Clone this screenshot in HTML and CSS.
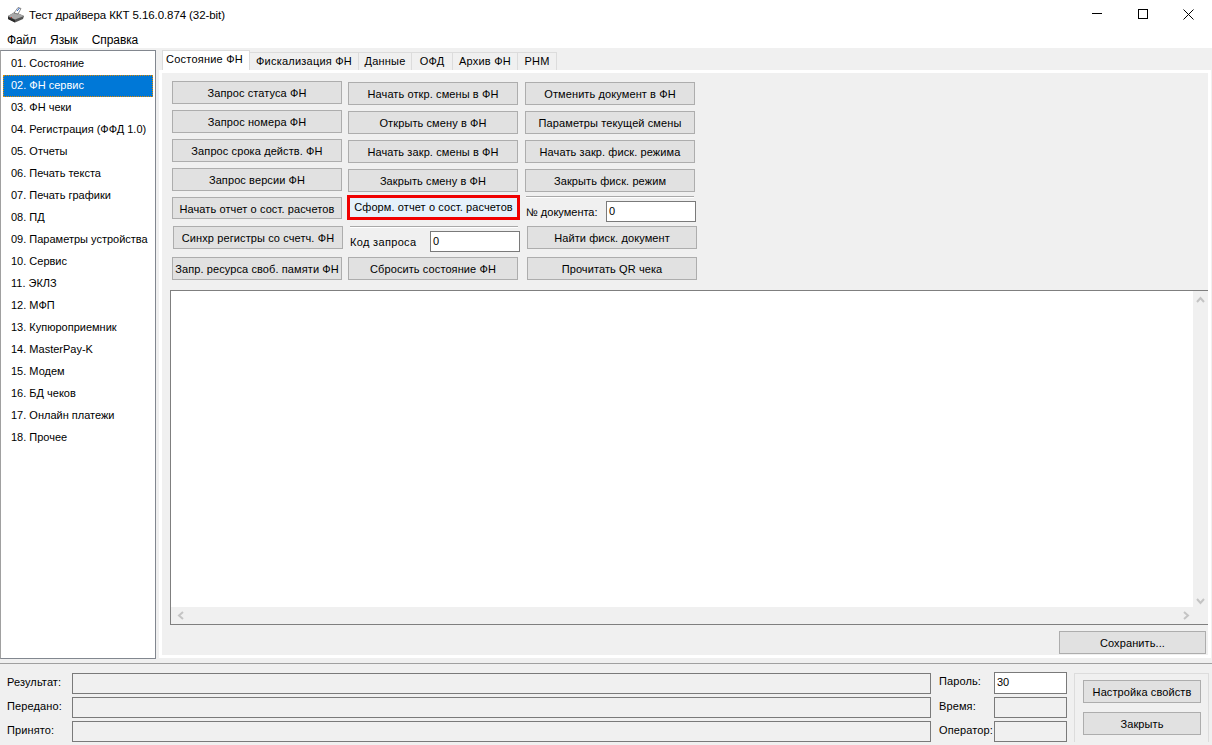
FILE: index.html
```html
<!DOCTYPE html>
<html lang="ru">
<head>
<meta charset="utf-8">
<title>Тест драйвера ККТ</title>
<link rel="stylesheet" href="styles.css">
</head>
<body>
<div class="app">
  <header class="titlebar">
    <svg class="appicon" width="18" height="16" viewBox="0 0 18 16">
      <path d="M1 9 L8 5 L17 9 L16 12 L8 15.5 L1 12 Z" fill="#555"/>
      <path d="M1 9 L8 5 L17 9 L8 12.5 Z" fill="#a8a8a8"/>
      <path d="M1 10 L8 13 L8 15.5 L1 12 Z" fill="#2b2b2b"/>
      <path d="M7 6 L11 .5 L14 1.5 L11 7 Z" fill="#fff" stroke="#444" stroke-width=".6"/>
      <path d="M10 4 L12.5 1" stroke="#2a5fc0" stroke-width="1"/>
      <rect x="4" y="10" width="1" height="1" fill="#c03030"/>
    </svg>
    <span class="title">Тест драйвера ККТ 5.16.0.874 (32-bit)</span>
    <div class="winctl">
      <svg width="10" height="10" viewBox="0 0 10 10"><path d="M0 4.5H10" stroke="#000" fill="none"/></svg>
      <svg width="10" height="10" viewBox="0 0 10 10"><rect x=".5" y=".5" width="9" height="9" stroke="#000" fill="none"/></svg>
      <svg width="11" height="11" viewBox="0 0 11 11"><path d="M.5 .5L10.5 10.5M10.5 .5L.5 10.5" stroke="#000" fill="none"/></svg>
    </div>
  </header>
  <nav class="menu"><span>Файл</span><span>Язык</span><span>Справка</span></nav>
  <main class="main">
    <ul class="side">
      <li>01. Состояние</li>
      <li class="sel">02. ФН сервис</li>
      <li>03. ФН чеки</li>
      <li>04. Регистрация (ФФД 1.0)</li>
      <li>05. Отчеты</li>
      <li>06. Печать текста</li>
      <li>07. Печать графики</li>
      <li>08. ПД</li>
      <li>09. Параметры устройства</li>
      <li>10. Сервис</li>
      <li>11. ЭКЛЗ</li>
      <li>12. МФП</li>
      <li>13. Купюроприемник</li>
      <li>14. MasterPay-K</li>
      <li>15. Модем</li>
      <li>16. БД чеков</li>
      <li>17. Онлайн платежи</li>
      <li>18. Прочее</li>
    </ul>
    <section class="content">
      <div class="tabs">
        <span class="tab active t0">Состояние ФН</span>
        <span class="tab t1">Фискализация ФН</span>
        <span class="tab t2">Данные</span>
        <span class="tab t3">ОФД</span>
        <span class="tab t4">Архив ФН</span>
        <span class="tab t5">РНМ</span>
      </div>
      <div class="pane">
        <div class="grid">
          <div class="col col1">
            <button class="btn">Запрос статуса ФН</button>
            <button class="btn">Запрос номера ФН</button>
            <button class="btn">Запрос срока действ. ФН</button>
            <button class="btn">Запрос версии ФН</button>
            <button class="btn h22">Начать отчет о сост. расчетов</button>
            <button class="btn shift1">Синхр регистры со счетч. ФН</button>
            <button class="btn">Запр. ресурса своб. памяти ФН</button>
          </div>
          <div class="col col2">
            <button class="btn">Начать откр. смены в ФН</button>
            <button class="btn">Открыть смену в ФН</button>
            <button class="btn">Начать закр. смены в ФН</button>
            <button class="btn">Закрыть смену в ФН</button>
            <button class="btn hot">Сформ. отчет о сост. расчетов</button>
            <div class="rule r2"></div>
            <div class="field f2"><label>Код запроса</label><span class="input">0</span></div>
            <button class="btn">Сбросить состояние ФН</button>
          </div>
          <div class="col col3">
            <button class="btn">Отменить документ в ФН</button>
            <button class="btn">Параметры текущей смены</button>
            <button class="btn">Начать закр. фиск. режима</button>
            <button class="btn">Закрыть фиск. режим</button>
            <div class="rule r3"></div>
            <div class="field f3"><label>№ документа:</label><span class="input">0</span></div>
            <button class="btn shift1">Найти фиск. документ</button>
            <button class="btn shift1">Прочитать QR чека</button>
          </div>
        </div>
        <div class="log">
          <div class="logmain">
            <div class="logtext"></div>
            <div class="vbar">
              <svg width="9" height="7" viewBox="0 0 9 7"><path d="M1 6L4.5 2L8 6" stroke="#c4c4c4" stroke-width="2" fill="none"/></svg>
              <svg width="9" height="7" viewBox="0 0 9 7"><path d="M1 1L4.5 5L8 1" stroke="#c4c4c4" stroke-width="2" fill="none"/></svg>
            </div>
          </div>
          <div class="hbar">
            <svg width="7" height="9" viewBox="0 0 7 9"><path d="M6 1L2 4.5L6 8" stroke="#c4c4c4" stroke-width="2" fill="none"/></svg>
            <svg width="7" height="9" viewBox="0 0 7 9"><path d="M1 1L5 4.5L1 8" stroke="#c4c4c4" stroke-width="2" fill="none"/></svg>
          </div>
        </div>
        <div class="savebar"><button class="btn save">Сохранить...</button></div>
      </div>
    </section>
  </main>
  <footer class="status">
    <div class="results">
      <div class="rrow"><label>Результат:</label><span class="out"></span></div>
      <div class="rrow"><label>Передано:</label><span class="out"></span></div>
      <div class="rrow"><label>Принято:</label><span class="out"></span></div>
    </div>
    <div class="meta">
      <div class="mrow"><label>Пароль:</label><span class="input pw">30</span></div>
      <div class="mrow"><label>Время:</label><span class="out"></span></div>
      <div class="mrow"><label>Оператор:</label><span class="out"></span></div>
    </div>
    <div class="group">
      <button class="btn gbtn">Настройка свойств</button>
      <button class="btn gbtn">Закрыть</button>
    </div>
  </footer>
</div>
</body>
</html>
```
FILE: styles.css
```css
* { box-sizing: border-box; }
html, body { margin: 0; padding: 0; }
body { width: 1212px; height: 745px; overflow: hidden; background: #f0f0f0; color: #000;
  font: 11px/13px Tahoma, "Liberation Sans", sans-serif; }
.app { display: flex; flex-direction: column; height: 745px; }

.titlebar { height: 30px; background: #fff; display: flex; align-items: center; padding-left: 7px; }
.appicon { margin-right: 4px; }
.title { font-size: 11.5px; letter-spacing: -.08px; }
.winctl { margin-left: auto; display: flex; align-items: center; gap: 36px; padding: 0 18px 2px 0; }
.winctl svg:last-child { margin-left: -1px; }

.menu { height: 18px; background: #fff; display: flex; gap: 14px; padding: 2px 0 0 7px; font-size: 12px; letter-spacing: -.1px; align-items: center; }

.main { height: 615px; display: flex; align-items: flex-start; padding-top: 2px; }
.side { list-style: none; margin: 0; padding: 2px; width: 156px; height: 609px; background: #fff;
  border: 1px solid #82878f; border-left-color: #a0a0a0; }
.side li { height: 22px; line-height: 21px; padding-left: 8px; white-space: nowrap; }
.side .sel { background: #0078d7; color: #fff; outline: 1px dotted #e08a00; outline-offset: -1px; }

.content { width: 1052px; margin-left: 3px; }
.tabs { display: flex; height: 20px; padding-left: 3px; align-items: flex-end; }
.tab { height: 18px; line-height: 17px; text-align: center; background: #f0f0f0; border: 1px solid #dcdcdc; border-left: 0; border-bottom: 0; letter-spacing: .02em; }
.tab.active { height: 20px; line-height: 17px; padding-right: 3px; background: #fff; border: 1px solid #dcdcdc; border-bottom: 0; }
.t0 { width: 88px; } .t1 { width: 109px; } .t2 { width: 53px; } .t3 { width: 41px; } .t4 { width: 65px; } .t5 { width: 39px; }

.pane { height: 588px; width: 1052px; background: #f0f0f0; border: 3px solid #fff; padding: 8px 0 0 10px; }
.grid { display: flex; height: 209px; }
.col { display: flex; flex-direction: column; width: 170px; }
.col2 { margin-left: 6px; padding-top: 1px; }
.col3 { margin-left: 7px; padding-top: 1px; }

.btn { display: block; width: 170px; height: 23px; padding: 2px 0 0; margin: 0 0 6px; background: #e1e1e1; border: 1px solid #adadad; border-radius: 0; color: #000;
  font: inherit; letter-spacing: .1px; white-space: nowrap; text-align: center; }
.h22 { height: 22px; }
.shift1 { margin-left: 1px; margin-top: -1px; }
.col3 .shift1 { margin-left: 2px; }
.col3 .shift1:last-child { margin-top: 2px; }
.col1 .h22 { margin-bottom: 0; }
.col1 .shift1 { margin-top: 7px; margin-bottom: 8px; }
.hot { width: 173px; height: 25px; padding: 0; margin: -3px 0 6px -1px; background: #e5f1fb; border: 3px solid #f00000; }
.rule { height: 2px; background: #a9a9a9; border-bottom: 1px solid #fff; }
.r2 { margin-left: 2px; width: 168px; }
.r3 { margin: -2px 0 0 1px; width: 168px; }

.field { display: flex; align-items: center; justify-content: space-between; white-space: nowrap; }
.field label { padding-top: 2px; }
.f2 { height: 21px; margin: 3px -2px 5px 2px; letter-spacing: .03em; }
.f3 { height: 21px; margin: 3px -1px 5px 1px; }
.input { display: block; height: 21px; background: #fff; border: 1px solid #7a7a7a; padding: 3px 0 0 2px; letter-spacing: 0; }
.f2 .input { width: 90px; }
.f3 .input { width: 90px; }

.log { width: 1038px; height: 335px; margin-left: -2px; background: #f0f0f0; border-top: 1px solid #7f7f7f; border-left: 1px solid #7f7f7f; border-bottom: 1px solid #7f7f7f; display: flex; flex-direction: column; }
.logmain { display: flex; height: 316px; }
.logtext { width: 1022px; background: #fff; }
.vbar { flex: 1; margin-top: 1px; display: flex; flex-direction: column; justify-content: space-between; align-items: center; padding: 4px 0 2px; }
.hbar { width: 1022px; flex: 1; display: flex; justify-content: space-between; align-items: center; padding: 0 3px 0 6px; }
.savebar { display: flex; justify-content: flex-end; padding: 6px 2px 0 0; }
.save { width: 147px; height: 23px; margin: 0; }

.status { flex: 1; border-top: 1px solid #a0a0a0; display: flex; align-items: flex-start; padding-top: 9px; letter-spacing: .01em; }
.results { width: 939px; padding-left: 7px; display: flex; flex-direction: column; gap: 3px; }
.rrow { display: flex; align-items: center; height: 21px; }
.rrow label { width: 65px; padding-bottom: 2px; }
.out { display: block; height: 21px; flex: 1; background: #f0f0f0; border: 1px solid #7a7a7a; }
.results .out { max-width: 859px; }
.meta { width: 128px; display: flex; flex-direction: column; gap: 3px; }
.mrow { display: flex; align-items: center; height: 21px; }
.mrow label { width: 55px; padding-bottom: 2px; }
.mrow:first-child label { padding-bottom: 5px; }
.mrow .input, .mrow .out { width: 73px; flex: none; }
.mrow .pw { height: 22px; margin-top: -1px; }
.group { width: 135px; height: 69px; margin-left: 7px; border: 1px solid #dcdcdc; border-bottom: 0; padding: 6px 0 0 8px; }
.gbtn { width: 118px; height: 23px; margin-bottom: 9px; }
```
